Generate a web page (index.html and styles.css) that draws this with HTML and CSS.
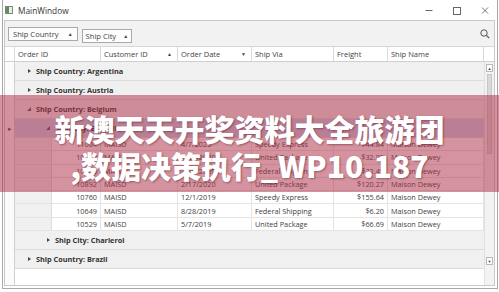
FILE: index.html
```html
<!DOCTYPE html>
<html>
<head>
    <title>MainWindow</title>
    <link rel="stylesheet" href="styles.css">
</head>
<body>
<div class="window">
    <div class="titlebar">
        <svg class="app-icon" width="8" height="8" viewBox="0 0 8 8">
            <rect x="0.5" y="0.5" width="7" height="7" fill="#e8efe6" stroke="#7d8a7a"/>
            <rect x="1" y="1" width="3" height="6" fill="#5f8f5a"/>
        </svg>
        <span class="title">MainWindow</span>
        <svg class="controls" width="80" height="20" viewBox="0 0 80 20">
            <line x1="10.5" y1="10.5" x2="17.5" y2="10.5" stroke="#666"/>
            <rect x="38.5" y="7.5" width="7" height="7" fill="none" stroke="#666"/>
            <path d="M67 7.5 L73 13.5 M73 7.5 L67 13.5" stroke="#666" stroke-width="0.9"/>
        </svg>
    </div>

    <div class="content">
        <div class="grouppanel">
            <div class="chip">Ship Country <span class="arrow">&#9650;</span></div>
            <div class="chip chip2">Ship City <span class="arrow">&#9650;</span></div>
            <svg class="search" width="10" height="10" viewBox="0 0 10 10">
                <circle cx="4" cy="4" r="3.2" fill="none" stroke="#555"/>
                <line x1="6.4" y1="6.4" x2="9.2" y2="9.2" stroke="#555" stroke-width="1.2"/>
            </svg>
        </div>

        <div class="header">
            <div class="hcell rh"></div>
            <div class="hcell c1">Order ID</div>
            <div class="hcell c2">Customer ID <span class="sort">&#9650;</span></div>
            <div class="hcell c3">Order Date <span class="sort">&#9660;</span></div>
            <div class="hcell c4">Ship Via</div>
            <div class="hcell c5">Freight</div>
            <div class="hcell c6">Ship Name</div>
            <div class="hcell corner"></div>
        </div>

        <div class="gridbody">
            <div class="rowheaders">
                <div class="rhcell g"></div>
                <div class="rhcell g"></div>
                <div class="rhcell g"></div>
                <div class="rhcell g current">&#9656;</div>
            </div>

            <div class="rows">
                <div class="grow lvl0"><span class="exp closed"></span>Ship Country: Argentina</div>
                <div class="grow lvl0"><span class="exp closed"></span>Ship Country: Austria</div>
                <div class="grow lvl0"><span class="exp open"></span>Ship Country: Belgium</div>
                <div class="grow lvl1 selected"><span class="exp open"></span>Ship City: Bruxelles</div>

                <div class="drow"><div class="indent"></div><div class="num">11004</div><div>MAISD</div><div>4/7/2020</div><div>Speedy Express</div><div class="num">$44.84</div><div>Maison Dewey</div></div>
                <div class="drow"><div class="indent"></div><div class="num">10978</div><div>MAISD</div><div>3/26/2020</div><div>United Package</div><div class="num">$32.82</div><div>Maison Dewey</div></div>
                <div class="drow"><div class="indent"></div><div class="num">10896</div><div>MAISD</div><div>2/19/2020</div><div>Federal Shipping</div><div class="num">$32.45</div><div>Maison Dewey</div></div>
                <div class="drow"><div class="indent"></div><div class="num">10892</div><div>MAISD</div><div>2/17/2020</div><div>United Package</div><div class="num">$120.27</div><div>Maison Dewey</div></div>
                <div class="drow"><div class="indent"></div><div class="num">10760</div><div>MAISD</div><div>12/1/2019</div><div>Speedy Express</div><div class="num">$155.64</div><div>Maison Dewey</div></div>
                <div class="drow"><div class="indent"></div><div class="num">10649</div><div>MAISD</div><div>8/28/2019</div><div>Federal Shipping</div><div class="num">$6.20</div><div>Maison Dewey</div></div>
                <div class="drow"><div class="indent"></div><div class="num">10529</div><div>MAISD</div><div>5/7/2019</div><div>United Package</div><div class="num">$66.69</div><div>Maison Dewey</div></div>

                <div class="grow lvl1"><span class="exp closed"></span>Ship City: Charleroi</div>
                <div class="grow lvl0"><span class="exp closed"></span>Ship Country: Brazil</div>
            </div>

            <div class="scrollbar">
                <div class="sbtn">&#9650;</div>
                <div class="track"><div class="thumb"></div></div>
                <div class="sbtn">&#9660;</div>
            </div>
        </div>
    </div>
</div>

<div class="banner">
    <div class="line">新澳天天开奖资料大全旅游团</div>
    <div class="line">,数据决策执行_WP10.187</div>
</div>
</body>
</html>
```

FILE: styles.css
```css
* {
    box-sizing: border-box;
}
body {
    margin: 0;
    width: 499px;
    height: 292px;
    overflow: hidden;
    position: relative;
    background-color: #ffffff;
    font-family: "Open Sans", "Noto Sans", sans-serif;
    font-size: 7.3px;
    color: #3f3f3f;
}
.window {
    margin-left: 2px;
    width: 496px;
    height: 289px;
    border: 1px solid #a8a8a8;
    border-top: none;
    padding: 0 2px 2px 1px;
    display: flex;
    flex-direction: column;
}
.titlebar {
    height: 20px;
    display: flex;
    align-items: center;
    padding-left: 1px;
}
.app-icon {
    margin-right: 5px;
}
.title {
    font-size: 8.3px;
    color: #333;
}
.controls {
    margin-left: auto;
    display: block;
}
.content {
    flex: 1;
    border: 1px solid #c9c9c9;
    display: flex;
    flex-direction: column;
    min-height: 0;
}
/* group drop area */
.grouppanel {
    height: 25px;
    background-color: #f2f2f2;
    display: flex;
    align-items: flex-start;
    padding-left: 3px;
}
.chip {
    margin-top: 6px;
    height: 14px;
    padding: 0 4px;
    background-color: #fdfdfd;
    border: 1px solid #a9a9a9;
    display: flex;
    align-items: center;
    gap: 9px;
    font-size: 7.6px;
}
.chip2 {
    margin-top: 8px;
    margin-left: 4px;
    padding: 0 3px;
    gap: 7px;
}
.arrow {
    font-size: 5px;
    color: #444;
}
.search {
    margin-left: auto;
    margin-top: 8px;
    margin-right: 4px;
}
/* column header */
.header {
    height: 16px;
    display: grid;
    grid-template-columns: 10px 86px 77px 74px 82px 54px 96px 10px;
    border-top: 1px solid #d6d6d6;
    border-bottom: 1px solid #cfcfcf;
    background-color: #ffffff;
}
.hcell {
    border-right: 1px solid #d9d9d9;
    display: flex;
    align-items: center;
    padding-left: 3px;
    color: #444;
    font-size: 7.5px;
}
.hcell.corner {
    border-right: none;
}
.sort {
    margin-left: auto;
    margin-right: 5px;
    font-size: 5px;
    color: #444;
}
.gridbody {
    flex: 1;
    display: grid;
    grid-template-columns: 10px 469px 10px;
    min-height: 0;
}
.rowheaders {
    border-right: 1px solid #d0d0d0;
    background-color: #fbfbfb;
    display: flex;
    flex-direction: column;
}
.rhcell {
    height: 19px;
    display: flex;
    align-items: center;
    justify-content: center;
    font-size: 7px;
    color: #555;
}
.rows {
    display: flex;
    flex-direction: column;
}
.grow {
    height: 19px;
    flex-shrink: 0;
    background-color: #f0f0f0;
    border-bottom: 1px solid #dcdcdc;
    display: flex;
    align-items: center;
    font-weight: bold;
    color: #333;
}
.grow.lvl0 {
    padding-left: 12px;
}
.grow.lvl1 {
    padding-left: 31px;
}
.grow.selected {
    background-color: #c9d3ea;
}
.exp {
    width: 6px;
    height: 6px;
    margin-right: 3px;
    position: relative;
}
.exp.closed::before {
    content: "";
    position: absolute;
    left: 1px;
    top: 0.5px;
    border-left: 3px solid #444;
    border-top: 2.5px solid transparent;
    border-bottom: 2.5px solid transparent;
}
.exp.open::before {
    content: "";
    position: absolute;
    left: 0;
    top: 1px;
    border-right: 4px solid #555;
    border-top: 4px solid transparent;
}
.drow {
    height: 13.3px;
    flex-shrink: 0;
    display: grid;
    grid-template-columns: 37px 49px 77px 74px 82px 54px 96px;
    background-color: #ffffff;
    border-bottom: 1px solid #e4e4e4;
}
.drow > div {
    border-right: 1px solid #e4e4e4;
    display: flex;
    align-items: center;
    padding-left: 3px;
    white-space: nowrap;
    overflow: hidden;
}
.drow > div.indent {
    background-color: #f0f0f0;
    border-right: 1px solid #dcdcdc;
}
.drow > div.num {
    justify-content: flex-end;
    padding-left: 0;
    padding-right: 3px;
}
/* scrollbar */
.scrollbar {
    display: flex;
    flex-direction: column;
    background-color: #f3f3f3;
    border-left: 1px solid #e0e0e0;
    padding: 1px 0 19px;
}
.sbtn {
    height: 8px;
    margin: 1px 1px;
    background-color: #ffffff;
    border: 1px solid #b9b9b9;
    font-size: 4px;
    display: flex;
    align-items: center;
    justify-content: center;
    color: #444;
}
.track {
    flex: 1;
    padding: 1px 2px;
}
.thumb {
    height: 80px;
    background-color: #d9d9d9;
    border: 1px solid #c6c6c6;
}
/* promo banner laid over the screenshot */
.banner {
    position: absolute;
    left: 0;
    top: 95px;
    width: 499px;
    height: 97px;
    background-color: rgba(172, 48, 70, 0.52);
    display: flex;
    flex-direction: column;
    align-items: center;
    padding-top: 15px;
    font-family: "Noto Sans CJK SC", "Noto Sans", sans-serif;
    font-weight: 900;
    font-size: 30px;
    line-height: 37px;
    color: #ffffff;
    text-shadow: 1px 1px 2px rgba(80, 20, 35, 0.45);
    white-space: nowrap;
}
```
